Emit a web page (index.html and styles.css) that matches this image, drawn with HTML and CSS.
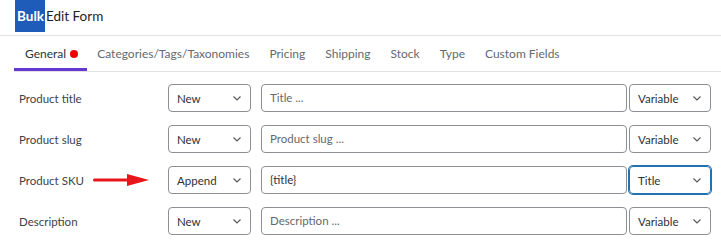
FILE: index.html
```html
<!DOCTYPE html>
<html lang="en">
<head>
  <meta charset="UTF-8">
  <title>Bulk Edit Form</title>
  <link rel="stylesheet" href="styles.css">
</head>
<body>

<div class="header">
  <span class="hl">Bulk</span>Edit Form
</div>

<!-- onglets -->
<div class="tabs">
  <div class="tab active">General <span class="dot"></span></div>
  <div class="tab">Categories/Tags/Taxonomies</div>
  <div class="tab">Pricing</div>
  <div class="tab">Shipping</div>
  <div class="tab">Stock</div>
  <div class="tab">Type</div>
  <div class="tab">Custom Fields</div>
</div>

<div class="form">
  <div class="row">
    <div class="label">Product title</div>
    <div class="select mode"><span>New</span><svg class="chev" width="8" height="5" viewBox="0 0 8 5"><path d="M0.5 0.5 L4 4 L7.5 0.5" fill="none" stroke="#555" stroke-width="1.1"/></svg></div>
    <div class="input placeholder">Title ...</div>
    <div class="select var"><span>Variable</span><svg class="chev" width="8" height="5" viewBox="0 0 8 5"><path d="M0.5 0.5 L4 4 L7.5 0.5" fill="none" stroke="#555" stroke-width="1.1"/></svg></div>
  </div>

  <div class="row">
    <div class="label">Product slug</div>
    <div class="select mode"><span>New</span><svg class="chev" width="8" height="5" viewBox="0 0 8 5"><path d="M0.5 0.5 L4 4 L7.5 0.5" fill="none" stroke="#555" stroke-width="1.1"/></svg></div>
    <div class="input placeholder">Product slug ...</div>
    <div class="select var"><span>Variable</span><svg class="chev" width="8" height="5" viewBox="0 0 8 5"><path d="M0.5 0.5 L4 4 L7.5 0.5" fill="none" stroke="#555" stroke-width="1.1"/></svg></div>
  </div>

  <div class="row">
    <div class="label">Product SKU
      <svg class="arrow" width="56" height="12" viewBox="0 0 56 12"><rect x="0" y="4.5" width="36" height="3" rx="1.5" fill="#e8161b"/><path d="M34 0 L56 6 L34 12 Z" fill="#e8161b"/></svg>
    </div>
    <div class="select mode"><span>Append</span><svg class="chev" width="8" height="5" viewBox="0 0 8 5"><path d="M0.5 0.5 L4 4 L7.5 0.5" fill="none" stroke="#555" stroke-width="1.1"/></svg></div>
    <div class="input">{title}</div>
    <div class="select var focus"><span>Title</span><svg class="chev" width="8" height="5" viewBox="0 0 8 5"><path d="M0.5 0.5 L4 4 L7.5 0.5" fill="none" stroke="#555" stroke-width="1.1"/></svg></div>
  </div>

  <div class="row">
    <div class="label">Description</div>
    <div class="select mode"><span>New</span><svg class="chev" width="8" height="5" viewBox="0 0 8 5"><path d="M0.5 0.5 L4 4 L7.5 0.5" fill="none" stroke="#555" stroke-width="1.1"/></svg></div>
    <div class="input placeholder">Description ...</div>
    <div class="select var"><span>Variable</span><svg class="chev" width="8" height="5" viewBox="0 0 8 5"><path d="M0.5 0.5 L4 4 L7.5 0.5" fill="none" stroke="#555" stroke-width="1.1"/></svg></div>
  </div>
</div>

</body>
</html>
```

FILE: styles.css
```css
body {
  margin: 0;
  font-family: "Lato", "Noto Sans", sans-serif;
  font-size: 12px;
  color: #2c3338;
  background: #fff;
}

.header {
  height: 35px;
  padding-left: 15px;
  border-bottom: 1px solid #e2e2e2;
  font-size: 13.5px;
  line-height: 32px;
  color: #1d2327;
}

.hl {
  display: inline-block;
  background: #1f5cb9;
  color: #fff;
  font-weight: bold;
  padding: 0 1px 0 2px;
  margin-right: 1px;
}

.tabs {
  display: flex;
  margin-left: 14px;
  border-bottom: 1px solid #e2e2e2;
}

.tab {
  height: 35px;
  box-sizing: border-box;
  padding: 3px 10px 0;
  line-height: 29px;
  color: #646970;
  border-bottom: 3px solid transparent;
}

.tab.active {
  padding-left: 11px;
  padding-right: 9px;
  color: #2c3338;
  border-bottom-color: #6339d1;
}

.dot {
  display: inline-block;
  width: 8px;
  height: 8px;
  border-radius: 50%;
  background: #e00;
  margin-left: 1px;
  vertical-align: 0;
}

.form {
  padding: 12px 10px 0 19px;
}

.row {
  display: flex;
  align-items: center;
  height: 28px;
  margin-bottom: 13px;
}

.label {
  width: 149px;
  display: flex;
  align-items: center;
  font-size: 11.5px;
  color: #3c434a;
}

.arrow {
  margin-left: 9px;
}

.select {
  box-sizing: border-box;
  height: 28px;
  border: 1px solid #8c8f94;
  border-radius: 4px;
  padding: 0 9px 0 8px;
  display: flex;
  align-items: center;
  justify-content: space-between;
  font-size: 11.5px;
  color: #2c3338;
}

.mode {
  width: 83px;
}

.var {
  width: 82px;
  margin-left: 2px;
}

.focus {
  border-color: #2271b1;
  box-shadow: 0 0 0 1px #2271b1;
}

.input {
  box-sizing: border-box;
  width: 366px;
  height: 28px;
  margin-left: 10px;
  border: 1px solid #8c8f94;
  border-radius: 4px;
  padding: 0 8px;
  line-height: 26px;
  font-size: 11.5px;
  color: #2c3338;
}

.placeholder {
  color: #646970;
}
```
